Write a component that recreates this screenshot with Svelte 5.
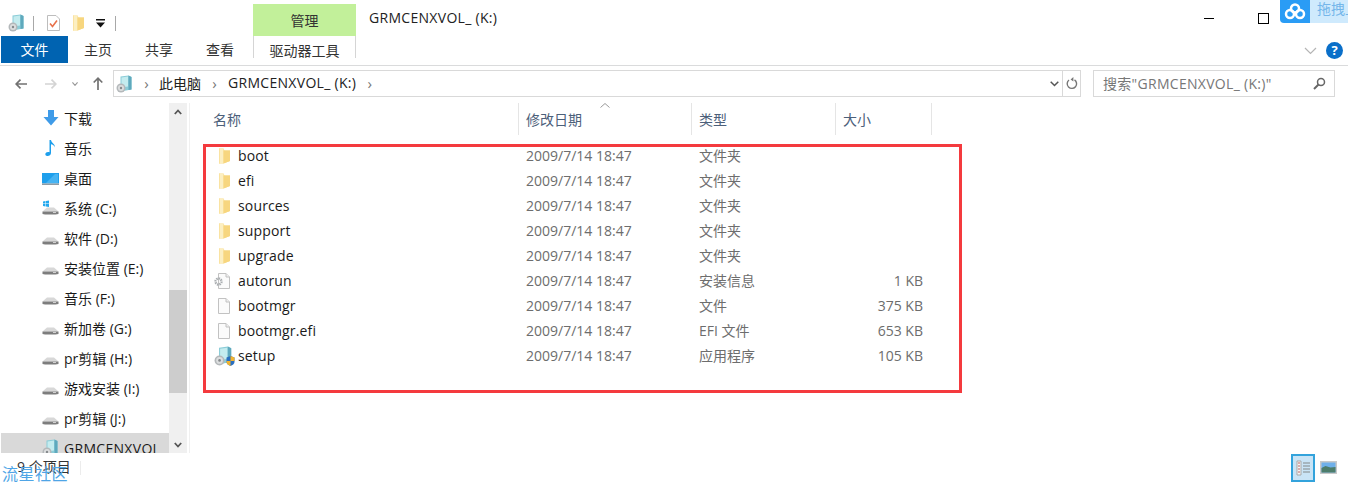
<script lang="ts">
  const navTop = [
    { icon: "down", label: "下载" },
    { icon: "music", label: "音乐" },
    { icon: "desk", label: "桌面" },
  ];
  const drives = ["系统 (C:)", "软件 (D:)", "安装位置 (E:)", "音乐 (F:)", "新加卷 (G:)", "pr剪辑 (H:)", "游戏安装 (I:)", "pr剪辑 (J:)"];
  const when = "2009/7/14 18:47";
  const files = [
    { icon: "folder", name: "boot", type: "文件夹", size: "" },
    { icon: "folder", name: "efi", type: "文件夹", size: "" },
    { icon: "folder", name: "sources", type: "文件夹", size: "" },
    { icon: "folder", name: "support", type: "文件夹", size: "" },
    { icon: "folder", name: "upgrade", type: "文件夹", size: "" },
    { icon: "inf", name: "autorun", type: "安装信息", size: "1 KB" },
    { icon: "file", name: "bootmgr", type: "文件", size: "375 KB" },
    { icon: "file", name: "bootmgr.efi", type: "EFI 文件", size: "653 KB" },
    { icon: "setup", name: "setup", type: "应用程序", size: "105 KB" },
  ];
</script>

{#snippet diskIcon(w)}
  <svg width={w} height={w} viewBox="0 0 18 18">
    <path d="M4.500 1.500L12.500 0.500l3 1.500v12.500l-11 2z" fill="#8ccdd8" />
    <path d="M5.500 2.500l6.500-1v10l-6.500 1z" fill="#c4ecef" />
    <path d="M12.500 .5l3 1.500v12.500l-3 .5z" fill="#5fa9bd" />
    <circle cx="5" cy="13" r="4.500" fill="#b4b8ba" />
    <circle cx="5" cy="13" r="3" fill="#dcdedf" />
    <circle cx="5" cy="13" r="1.200" fill="#85898c" />
  </svg>
{/snippet}

{#snippet folderIcon()}
  <svg width="13" height="16" viewBox="0 0 13 16">
    <path d="M1 .5h4.500l1 2H12V13L5.500 15.500H1z" fill="#f8dd90" />
    <path d="M1 .5h4.500v15H1z" fill="#fcefc2" />
    <path d="M1 .5h1v15H1z" fill="#fae3a2" />
    <path d="M5.500 2.500H12V13l-6.500 2.500z" fill="#f7d67f" />
  </svg>
{/snippet}

{#snippet pageIcon()}
  <svg width="14" height="18" viewBox="0 0 14 18">
    <path d="M1.500 1.500h7.500l3.500 3.500v11.500h-11z" fill="#fbfbfb" stroke="#c2c2c2" />
    <path d="M9 1.500v3.500h3.500" fill="#efefef" stroke="#c2c2c2" />
  </svg>
{/snippet}

{#snippet driveIcon(win)}
  <svg class="drive" width="17" height="16" viewBox="0 0 17 16">
    {#if win}
      <path d="M1 1.500l2.500-.4v2.400H1zM4 1l3-.5v3H4zM1 4h2.500v2.400L1 6zM4 4h3v3l-3-.5z" fill="#22a8ee" />
    {/if}
    <path d="M0.500 11.500L5 7.500h7l4.500 4z" fill="#d8d8d8" />
    <path d="M0.500 11.500h16v2.500l-3 .6H3l-2.500-.6z" fill="#7d7d7d" />
    <path d="M11 12.500h3" stroke="#d0d0d0" />
  </svg>
{/snippet}

<div class="win">
  <header class="title">
    <div class="qat">
      {@render diskIcon(18)}
      <i class="qsep"></i>
      <svg width="15" height="18" viewBox="0 0 15 18">
        <path d="M1.500 1.500h8.500l3.500 3.500v11.500h-12z" fill="#fff" stroke="#bdbdbd" />
        <path d="M4 9.500l2.500 3 4.500-6" fill="none" stroke="#e8714a" stroke-width="1.600" />
      </svg>
      <span class="qfolder">{@render folderIcon()}</span>
      <svg class="qdrop" width="9" height="9" viewBox="0 0 9 9">
        <path d="M0 0h9v1.500H0zM0 3.500h9L4.500 8.500z" fill="#111" />
      </svg>
      <i class="qsep second"></i>
    </div>
    <div class="manage">管理</div>
    <div class="wintitle latin">GRMCENXVOL_ (K:)</div>
    <div class="controls">
      <i class="min"></i>
      <i class="max"></i>
    </div>
  </header>

  <div class="ribbon">
    <div class="filetab">文件</div>
    <div class="tab">主页</div>
    <div class="tab">共享</div>
    <div class="tab">查看</div>
    <div class="tooltab">驱动器工具</div>
    <div class="ribbon-end">
      <svg width="13" height="8" viewBox="0 0 13 8"><path d="M1 1l5.500 5.500L12 1" fill="none" stroke="#b5b5b5" stroke-width="1.200" /></svg>
      <span class="help">?</span>
    </div>
  </div>

  <div class="addr">
    <div class="navbtns">
      <svg class="back" width="12" height="10" viewBox="0 0 12 10"><path d="M5.500.7L1.200 5l4.300 4.300M1.200 5H12" fill="none" stroke="#727272" stroke-width="1.700" /></svg>
      <svg class="fwd" width="12" height="10" viewBox="0 0 12 10"><path d="M6.500.7L10.800 5 6.500 9.300M10.800 5H0" fill="none" stroke="#d4d4d4" stroke-width="1.700" /></svg>
      <svg class="recent" width="6" height="4" viewBox="0 0 6 4"><path d="M.4.400L3 3.300 5.600.4" fill="none" stroke="#999" stroke-width="1.200" /></svg>
      <svg class="up" width="10" height="13" viewBox="0 0 10 13"><path d="M.7 5.500L5 1.200l4.300 4.300M5 1.200V13" fill="none" stroke="#727272" stroke-width="1.700" /></svg>
    </div>
    <div class="crumbs">
      {@render diskIcon(18)}
      <span class="chev first">›</span>
      <span class="crumb">此电脑</span>
      <span class="chev">›</span>
      <span class="crumb latin">GRMCENXVOL_ (K:)</span>
      <span class="chev">›</span>
      <span class="spacer"></span>
      <svg class="crumbdrop" width="9" height="6" viewBox="0 0 9 6"><path d="M.7.700L4.500 4.500 8.300.700" fill="none" stroke="#555" stroke-width="1.500" /></svg>
      <span class="refresh">
        <svg width="12" height="13" viewBox="0 0 12 13"><path d="M8.500 2.800A4.700 4.700 0 1 1 3 3" fill="none" stroke="#777" stroke-width="1.400" /><path d="M5.500 0v5.500L2 3z" fill="#777" transform="translate(3 0) scale(.8)" /></svg>
      </span>
    </div>
    <div class="search">
      <span class="latin searchtext">搜索"GRMCENXVOL_ (K:)"</span>
      <svg width="13" height="13" viewBox="0 0 13 13"><circle cx="8" cy="5" r="3.500" fill="none" stroke="#666" stroke-width="1.500" /><path d="M5.500 7.500L1 12" stroke="#666" stroke-width="2" /></svg>
    </div>
  </div>

  <div class="main">
    <nav class="nav">
      <div class="navlist">
        {#each navTop as n (n.label)}
          <div class="navrow">
            <span class="navicon">
              {#if n.icon === "down"}
                <svg width="16" height="16" viewBox="0 0 16 16"><path d="M5 0h6v7h4.500L8 15.500.5 7H5z" fill="#3f9be8" /></svg>
              {:else if n.icon === "music"}
                <svg width="14" height="18" viewBox="0 0 14 18"><path d="M5.500 1h1.500c.5 3 4 3.500 4 7.500-.5-2-2.500-3-4-3.300V14c0 2-2 3.300-4 3-2-.4-2.200-2.500-.8-3.500 1-.7 2.300-.7 3.300-.2z" fill="#1e9fec" /></svg>
              {:else}
                <svg width="17" height="13" viewBox="0 0 17 13"><path d="M0 1h17v10.500H0z" fill="#1e9fec" /><path d="M0 11.500h17V13H0z" fill="#8f9ba3" /><path d="M4 11L13 2h3v9z" fill="#47b3f2" /></svg>
              {/if}
            </span>
            <span>{n.label}</span>
          </div>
        {/each}
        {#each drives as d, i (d + i)}
          <div class="navrow">
            <span class="navicon">{@render driveIcon(i === 0)}</span>
            <span>{d}</span>
          </div>
        {/each}
        <div class="navrow selected">
          <span class="navicon">{@render diskIcon(18)}</span>
          <span class="clip latin">GRMCENXVOL_ (K:)</span>
        </div>
      </div>
      <div class="scroll">
        <div class="arrow">
          <svg width="8" height="6" viewBox="0 0 8 6"><path d="M.8 5L4 1.500 7.200 5" fill="none" stroke="#555" stroke-width="1.800" /></svg>
        </div>
        <div class="track"><div class="thumb"></div></div>
        <div class="arrow">
          <svg width="8" height="6" viewBox="0 0 8 6"><path d="M.8 1L4 4.500 7.200 1" fill="none" stroke="#555" stroke-width="1.800" /></svg>
        </div>
      </div>
    </nav>

    <section class="list">
      <div class="head">
        <div class="col c1">名称</div>
        <div class="col c2">
          <svg class="sort" width="10" height="5" viewBox="0 0 10 5"><path d="M.5 4.500L5 .5l4.500 4" fill="none" stroke="#999" /></svg>
          修改日期
        </div>
        <div class="col c3">类型</div>
        <div class="col c4">大小</div>
      </div>
      <div class="rows">
        {#each files as f (f.name)}
          <div class="row">
            <div class="c1 namecell">
              <span class="ficon">
                {#if f.icon === "folder"}
                  {@render folderIcon()}
                {:else if f.icon === "file"}
                  {@render pageIcon()}
                {:else if f.icon === "inf"}
                  <span class="inf">
                    {@render pageIcon()}
                    <svg class="gear" width="9" height="9" viewBox="0 0 9 9"><circle cx="4.500" cy="4.500" r="3" fill="none" stroke="#a9adb0" stroke-width="2.400" stroke-dasharray="1.500 .8" /></svg>
                  </span>
                {:else}
                  <span class="setupicon">
                    {@render diskIcon(20)}
                    <svg class="shield" width="9" height="10" viewBox="0 0 9 10"><path d="M.5 1.500L4.500 0l4 1.500V6c0 2-2 3.300-4 4-2-.7-4-2-4-4z" fill="#2a6fc0" /><path d="M4.500 0l4 1.500V5h-4zM.5 5h4v5c-2-.7-4-2-4-4z" fill="#f2b32e" /></svg>
                  </span>
                {/if}
              </span>
              <span class="fname">{f.name}</span>
            </div>
            <div class="c2 sub">{when}</div>
            <div class="c3 sub kind">{f.type}</div>
            <div class="c4 sub size">{f.size}</div>
          </div>
        {/each}
      </div>
      <div class="redbox"></div>
    </section>
  </div>

  <footer class="status">
    <span class="count">9 个项目</span>
    <i class="statsep"></i>
    <span class="spacer"></span>
    <span class="view on">
      <svg width="16" height="16" viewBox="0 0 16 16">
        <path d="M2 1h4v14H2z" fill="#f4f4f4" stroke="#a8a8a8" />
        <path d="M3 3h2M3 6h2M3 9h2M3 12h2" stroke="#b66" />
        <path d="M8 3h7M8 6h7M8 9h7M8 12h7" stroke="#9aa7ad" stroke-width="1.500" />
      </svg>
    </span>
    <span class="view">
      <svg width="17" height="13" viewBox="0 0 17 13">
        <path d="M0 0h17v13H0z" fill="#c9c9c9" />
        <path d="M1.500 1.500h14v10h-14z" fill="#6fb0ea" />
        <path d="M1.500 7l4-2 5 1.500 5 -.5v5.500h-14z" fill="#4d7d6b" />
      </svg>
    </span>
  </footer>

  <div class="cloud">
    <span class="cloudlogo">
      <svg width="22" height="17" viewBox="0 0 22 17">
        <circle cx="11" cy="5.500" r="4" fill="none" stroke="#fff" stroke-width="2.500" />
        <circle cx="6" cy="11" r="4" fill="none" stroke="#fff" stroke-width="2.500" />
        <circle cx="16" cy="11" r="4" fill="none" stroke="#fff" stroke-width="2.500" />
      </svg>
    </span>
    <span class="cloudtext">拖拽上</span>
  </div>
  <div class="mark">流星社区</div>
</div>

<style>
  :global(body) { background: #fff; }
  .win {
    position: relative;
    display: flex;
    flex-direction: column;
    width: 1348px;
    height: 482px;
    overflow: hidden;
    background: #fff;
    color: #1a1a1a;
    font-family: "Open Sans", "Noto Sans CJK SC", sans-serif;
    font-size: 14px;
  }
  svg { display: block; flex: none; }
  .latin { letter-spacing: .3px; }

  .title { display: flex; height: 36px; padding-top: 4px; box-sizing: border-box; }
  .qat { display: flex; align-items: center; width: 253px; padding: 6px 0 0 8px; box-sizing: border-box; }
  .qsep { width: 1px; height: 15px; background: #a8a8a8; margin: 0 12px 0 7px; }
  .qsep.second { margin: 0 0 0 10px; }
  .qfolder { margin-left: 11px; }
  .qdrop { margin-left: 11px; }
  .manage {
    width: 103px;
    background: #c2f09a;
    text-align: center;
    line-height: 34px;
    color: #333;
  }
  .wintitle { margin-left: 13px; line-height: 27px; color: #222; }
  .controls { display: flex; align-items: center; margin-left: auto; height: 28px; padding-right: 79px; }
  .min { width: 10px; height: 1px; background: #000; margin-right: 44px; }
  .max { width: 9px; height: 9px; border: 1px solid #000; }

  .ribbon {
    display: flex;
    box-sizing: border-box;
    height: 30px;
    border-bottom: 1px solid #dadbdc;
    padding-left: 1px;
  }
  .filetab {
    width: 67px;
    height: 27px;
    background: #0063b1;
    color: #fff;
    text-align: center;
    line-height: 27px;
  }
  .tab { width: 60px; height: 27px; margin-right: 1px; text-align: center; line-height: 27px; color: #333; }
  .tooltab {
    box-sizing: border-box;
    width: 103px;
    height: 22px;
    margin-left: 2px;
    border: 1px solid #d5d5d5;
    border-width: 0 1px;
    text-align: center;
    line-height: 30px;
    color: #333;
  }
  .ribbon-end { display: flex; align-items: center; gap: 9px; margin-left: auto; height: 29px; padding: 0 5px 0 0; }
  .help {
    width: 17px;
    height: 17px;
    border-radius: 50%;
    background: #0a6fc9;
    color: #fff;
    font: bold 13px/17px "Open Sans", sans-serif;
    text-align: center;
  }

  .addr { display: flex; align-items: center; height: 27px; margin-top: 4px; color: #222; }
  .navbtns { display: flex; align-items: center; width: 113px; padding-left: 15px; box-sizing: border-box; }
  .fwd { margin-left: 18px; }
  .recent { margin-left: 15px; }
  .up { margin-left: 15px; }
  .crumbs {
    display: flex;
    align-items: center;
    box-sizing: border-box;
    width: 968px;
    height: 27px;
    border: 1px solid #d9d9d9;
    padding-left: 2px;
  }
  .crumb { padding-bottom: 2px; }
  .chev { width: 27px; text-align: center; color: #777; font-size: 15px; line-height: 20px; padding-bottom: 2px; }
  .chev.first { width: 25px; }
  .spacer { flex: 1; }
  .crumbdrop { margin-right: 3px; }
  .refresh {
    display: flex;
    align-items: center;
    justify-content: center;
    width: 17px;
    height: 25px;
    border-left: 1px solid #d9d9d9;
  }
  .search {
    display: flex;
    align-items: center;
    justify-content: space-between;
    box-sizing: border-box;
    width: 242px;
    height: 27px;
    margin-left: 12px;
    border: 1px solid #d9d9d9;
    padding: 0 8px 0 9px;
    color: #777;
  }
  .searchtext { padding-bottom: 2px; }

  .main { display: flex; flex: 1; min-height: 0; margin-top: 6px; position: relative; }
  .nav { display: flex; flex: none; width: 190px; border-right: 1px solid #f0f0f0; box-sizing: border-box; }
  .navlist { width: 168px; margin-left: 1px; overflow: hidden; }
  .navrow {
    display: flex;
    align-items: center;
    height: 30px;
    white-space: nowrap;
    padding-left: 41px;
    gap: 5px;
    color: #1a1a1a;
  }
  .navicon { display: flex; justify-content: center; width: 17px; }
  .selected { background: #d9d9d9; }
  .clip { overflow: hidden; }
  .scroll { display: flex; flex-direction: column; width: 18px; background: #f0f0f0; }
  .arrow { display: flex; align-items: center; justify-content: center; height: 17px; }
  .track { flex: 1; padding-top: 170px; }
  .thumb { height: 103px; background: #cdcdcd; }

  .list { flex: 1; position: relative; }
  .head { display: flex; height: 32px; }
  .col {
    position: relative;
    box-sizing: border-box;
    border-right: 1px solid #e5e5e5;
    line-height: 33px;
    color: #4c607a;
    padding-left: 7px;
  }
  .c1 { width: 329px; padding-left: 23px; box-sizing: border-box; }
  .c2 { width: 173px; padding-left: 7px; box-sizing: border-box; }
  .c3 { width: 144px; padding-left: 7px; box-sizing: border-box; }
  .c4 { width: 96px; padding-left: 7px; box-sizing: border-box; }
  .sort { position: absolute; left: 81px; top: 0; }
  .rows { padding-top: 8px; }
  .row { display: flex; align-items: center; height: 25px; }
  .namecell { display: flex; align-items: center; padding-left: 26px; }
  .ficon { display: flex; justify-content: center; width: 16px; margin-right: 6px; }
  .inf, .setupicon { position: relative; display: block; }
  .gear { position: absolute; left: -3px; top: 5px; }
  .shield { position: absolute; right: -1px; bottom: 0; }
  .fname { color: #1a1a1a; letter-spacing: .15px; }
  .sub { color: #6d6d6d; }
  .kind { padding-bottom: 2px; }
  .size { text-align: right; padding-right: 9px; }
  .redbox {
    position: absolute;
    left: 13px;
    top: 41px;
    width: 759px;
    height: 249px;
    box-sizing: border-box;
    border: 3px solid #f43a3e;
  }

  .status { display: flex; align-items: center; height: 29px; flex: none; }
  .count { margin-left: 17px; color: #333; width: 63px; padding-bottom: 4px; }
  .statsep { width: 1px; height: 14px; background: #ececec; }
  .view { display: flex; align-items: center; justify-content: center; box-sizing: border-box; width: 24px; height: 28px; }
  .view.on { background: #c9e4f6; border: 2px solid #33a3dc; margin-right: 1px; }
  .view:last-child { margin-right: 8px; }

  .cloud {
    position: absolute;
    right: 0;
    top: 0;
    display: flex;
    width: 68px;
    height: 23px;
    border-radius: 0 0 0 4px;
    overflow: hidden;
  }
  .cloudlogo { display: flex; align-items: center; justify-content: center; width: 30px; background: #2a9cf5; }
  .cloudtext {
    flex: 1;
    padding-left: 7px;
    background: #cfeafd;
    color: #74b6ea;
    font-size: 14px;
    line-height: 18px;
    white-space: nowrap;
    overflow: hidden;
  }
  .mark {
    position: absolute;
    left: 2px;
    bottom: -2px;
    color: #4fa5e6;
    font-size: 16px;
    line-height: 20px;
    letter-spacing: .5px;
  }
</style>
